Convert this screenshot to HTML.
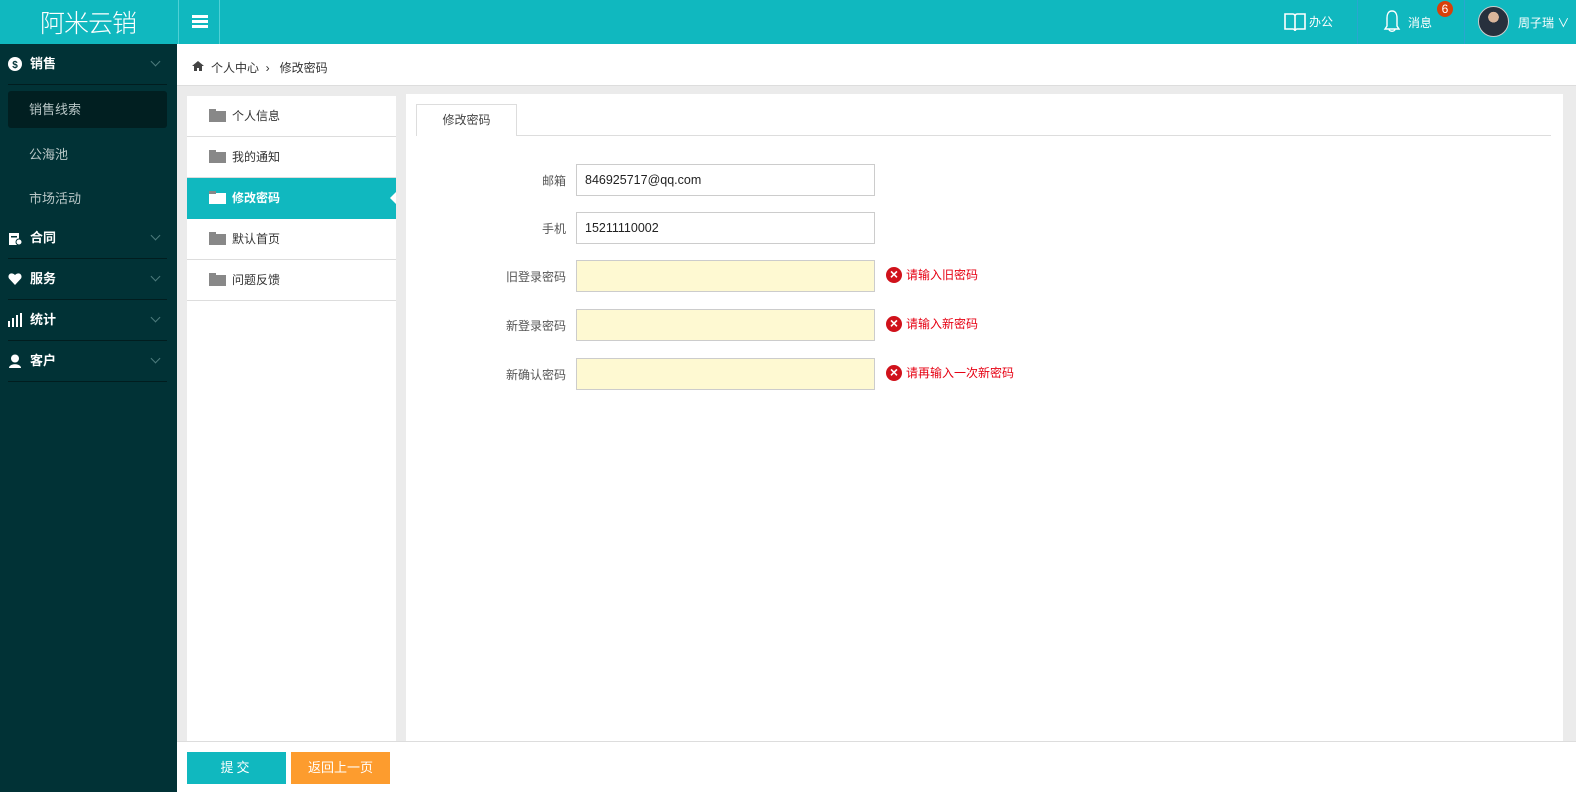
<!DOCTYPE html>
<html><head><meta charset="utf-8"><style>
*{margin:0;padding:0;box-sizing:border-box}
body{width:1576px;height:792px;overflow:hidden;background:#ebebeb;font-family:"Liberation Sans","Noto Sans CJK SC",sans-serif;font-size:13px;color:#333;position:relative}
.abs{position:absolute}
#hdr{left:0;top:0;width:1576px;height:44px;background:#10b8bf}
#side{left:0;top:44px;width:177px;height:748px;background:#013236}
.mi{position:absolute;left:8px;width:159px;height:41px;border-bottom:1px solid #011d1f;color:#fff;font-weight:bold;font-size:13px;line-height:40px;padding-left:22px}
.mi .ar{position:absolute;right:8px;top:14px;width:7px;height:7px;border-right:1px solid #4d7a7c;border-bottom:1px solid #4d7a7c;transform:rotate(45deg)}
.sub{position:absolute;left:8px;width:159px;height:37px;line-height:37px;padding-left:21px;color:#b9c7c7;font-size:13px}
.ico{position:absolute;left:0;top:13px;width:14px;height:14px}
.li{position:absolute;left:187px;width:209px;height:41px;border-bottom:1px solid #ddd;line-height:40px;padding-left:45px;font-size:12px;color:#333;background:#fff}
.fold{position:absolute;left:22px;top:15px;width:17px;height:11px;background:#888}
.fold:before{content:"";position:absolute;left:0;top:-2px;width:7px;height:3px;background:#888}
.lbl{position:absolute;width:100px;left:466px;text-align:right;font-size:12px;color:#555}
.inp{position:absolute;left:576px;width:299px;height:32px;border:1px solid #ccc;background:#fff;padding-left:8px;line-height:30px;font-size:12.5px;color:#222}
.y{background:#fef9d2}
.err{position:absolute;left:886px;color:#e60012;font-size:12px;line-height:16px;padding-left:20px}
.err:before{content:"×";position:absolute;left:0;top:0;width:16px;height:16px;border-radius:50%;background:#d0121b;color:#fff;font-weight:bold;text-align:center;line-height:15px;font-size:14px}
</style></head><body>
<div id="hdr" class="abs">
 <div class="abs" style="left:40px;top:6px;color:#fff;font-size:25px;letter-spacing:-1px;line-height:32px;font-family:'Noto Sans CJK SC',sans-serif;font-weight:300">阿米云销</div>
 <div class="abs" style="left:178px;top:0;width:1px;height:44px;background:#4fd0d5"></div>
 <div class="abs" style="left:219px;top:0;width:1px;height:44px;background:#4fd0d5"></div>
 <div class="abs" style="left:192px;top:15px;width:16px;height:3px;background:#fff;box-shadow:0 5px 0 #fff,0 10px 0 #fff"></div>
 <svg class="abs" style="left:1284px;top:12px" width="22" height="20" viewBox="0 0 22 20"><path d="M1 2h8c1 0 2 1 2 2v15c0-1-1-2-2-2H1z M21 2h-8c-1 0-2 1-2 2v15c0-1 1-2 2-2h8z" fill="none" stroke="#fff" stroke-width="1.6"/></svg>
 <div class="abs" style="left:1309px;top:13px;color:#fff;font-size:12px">办公</div>
 <div class="abs" style="left:1357px;top:0;width:1px;height:44px;background:#2aa6d0"></div>
 <svg class="abs" style="left:1383px;top:9px" width="18" height="25" viewBox="0 0 18 25"><path d="M9 2C5 2 4 6 4 9v8l-2 3h14l-2-3V9c0-3-1-7-5-7z M6 20c0 3 6 3 6 0" fill="none" stroke="#fff" stroke-width="1.4"/></svg>
 <div class="abs" style="left:1408px;top:14px;color:#fff;font-size:12px">消息</div>
 <div class="abs" style="left:1437px;top:1px;width:16px;height:16px;border-radius:50%;background:#d8400a;color:#fff;font-size:12px;text-align:center;line-height:16px">6</div>
 <div class="abs" style="left:1464px;top:0;width:1px;height:44px;background:#2aa6d0"></div>
 <div class="abs" style="left:1478px;top:6px;width:31px;height:31px;border-radius:50%;background:radial-gradient(circle at 50% 35%,#d9b59b 0 22%,#27303d 23% 100%);border:1px solid #ccc"></div>
 <div class="abs" style="left:1518px;top:14px;color:#fff;font-size:12px">周子瑞 ∨</div>
</div>
<div id="side" class="abs">
 <div class="mi" style="top:0"><svg class="ico" viewBox="0 0 14 14"><circle cx="7" cy="7" r="7" fill="#fff"/><text x="7" y="11" font-size="10" text-anchor="middle" fill="#013236" font-weight="bold">$</text></svg>销售<span class="ar"></span></div>
 <div class="sub" style="top:47px;background:#011f21;border-radius:3px">销售线索</div>
 <div class="sub" style="top:92px">公海池</div>
 <div class="sub" style="top:136px">市场活动</div>
 <div class="mi" style="top:174px"><svg class="ico" viewBox="0 0 14 14"><rect x="1" y="2" width="10" height="12" fill="#fff"/><rect x="3" y="5" width="6" height="1.5" fill="#013236"/><circle cx="11" cy="11" r="3" fill="#fff" stroke="#013236"/></svg>合同<span class="ar"></span></div>
 <div class="mi" style="top:215px"><svg class="ico" viewBox="0 0 14 14"><path d="M7 13L1 6.5C-1 3 3-1 7 3c4-4 8 0 6 3.5z" fill="#fff"/></svg>服务<span class="ar"></span></div>
 <div class="mi" style="top:256px"><svg class="ico" viewBox="0 0 14 14"><rect x="0" y="8" width="2" height="6" fill="#fff"/><rect x="4" y="5" width="2" height="9" fill="#fff"/><rect x="8" y="2" width="2" height="12" fill="#fff"/><rect x="12" y="0" width="2" height="14" fill="#fff"/></svg>统计<span class="ar"></span></div>
 <div class="mi" style="top:297px"><svg class="ico" viewBox="0 0 14 14"><circle cx="7" cy="4.5" r="4" fill="#fff"/><path d="M1 14c0-5 12-5 12 0z" fill="#fff"/></svg>客户<span class="ar"></span></div>
</div>
<div class="abs" style="left:177px;top:44px;width:1399px;height:42px;background:#fff;border-bottom:1px solid #ddd"></div>
<svg class="abs" style="left:192px;top:61px" width="12" height="10" viewBox="0 0 12 10"><path d="M6 0L0 5h2v5h3V7h2v3h3V5h2z" fill="#444"/></svg>
<div class="abs" style="left:211px;top:59px;font-size:12px;color:#333">个人中心 &nbsp;›&nbsp;&nbsp; 修改密码</div>
<div class="abs" style="left:187px;top:96px;width:209px;height:645px;background:#fff"></div>
<div class="li" style="top:96px"><i class="fold"></i>个人信息</div>
<div class="li" style="top:137px"><i class="fold"></i>我的通知</div>
<div class="li" style="top:178px;background:#10b8bf;color:#fff;font-weight:bold;border-color:#10b8bf"><i class="fold" style="background:#fff"></i>修改密码<span style="position:absolute;right:0;top:14px;border:6px solid transparent;border-right-color:#fff"></span></div>
<div class="li" style="top:219px"><i class="fold"></i>默认首页</div>
<div class="li" style="top:260px"><i class="fold"></i>问题反馈</div>
<div class="abs" style="left:406px;top:94px;width:1157px;height:647px;background:#fff"></div>
<div class="abs" style="left:417px;top:135px;width:1134px;height:1px;background:#ddd"></div>
<div class="abs" style="left:416px;top:104px;width:101px;height:32px;border:1px solid #ddd;border-bottom:none;background:#fff;text-align:center;line-height:31px;font-size:12px;color:#444">修改密码</div>
<div class="lbl" style="top:172px">邮箱</div><div class="inp" style="top:164px">846925717@qq.com</div>
<div class="lbl" style="top:220px">手机</div><div class="inp" style="top:212px">15211110002</div>
<div class="lbl" style="top:268px">旧登录密码</div><div class="inp y" style="top:260px"></div><div class="err" style="top:267px">请输入旧密码</div>
<div class="lbl" style="top:317px">新登录密码</div><div class="inp y" style="top:309px"></div><div class="err" style="top:316px">请输入新密码</div>
<div class="lbl" style="top:366px">新确认密码</div><div class="inp y" style="top:358px"></div><div class="err" style="top:365px">请再输入一次新密码</div>
<div class="abs" style="left:177px;top:741px;width:1399px;height:51px;background:#fff;border-top:1px solid #ddd"></div>
<div class="abs" style="left:187px;top:752px;width:99px;height:32px;background:#10b8bf;color:#fff;text-align:center;line-height:32px;font-size:13px;letter-spacing:3px">提交</div>
<div class="abs" style="left:291px;top:752px;width:99px;height:32px;background:#fd9c2e;color:#fff;text-align:center;line-height:32px;font-size:13px">返回上一页</div>
</body></html>
